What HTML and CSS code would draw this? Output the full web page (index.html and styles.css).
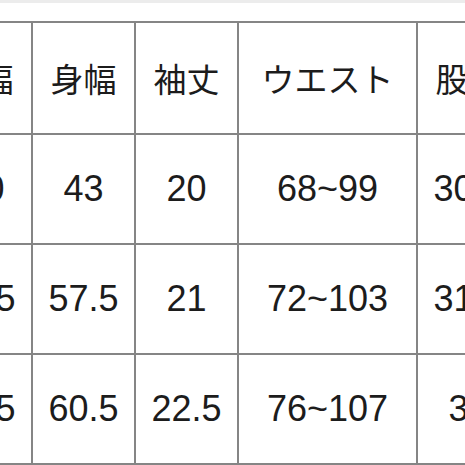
FILE: index.html
```html
<!DOCTYPE html>
<html lang="ja">
<head>
<meta charset="utf-8">
<link rel="stylesheet" href="styles.css">
</head>
<body>
<div class="sheet">
  <div class="edge"></div>
  <table class="size-table">
    <colgroup>
      <col class="c-narrow">
      <col class="c-narrow">
      <col class="c-narrow">
      <col class="c-wide">
      <col class="c-narrow">
    </colgroup>
    <tr class="head">
      <td>肩幅</td><td>身幅</td><td>袖丈</td><td>ウエスト</td><td>股下</td>
    </tr>
    <tr>
      <td class="shift">50</td><td>43</td><td>20</td><td>68~99</td><td>30.5</td>
    </tr>
    <tr>
      <td>54.5</td><td>57.5</td><td>21</td><td>72~103</td><td>31.5</td>
    </tr>
    <tr>
      <td>56.5</td><td>60.5</td><td>22.5</td><td>76~107</td><td>32</td>
    </tr>
  </table>
</div>
</body>
</html>
```
FILE: styles.css
```css
html, body {
  margin: 0;
  padding: 0;
  background: #ffffff;
}
body {
  width: 465px;
  height: 465px;
  overflow: hidden;
}
.sheet {
  width: 465px;
  height: 465px;
  overflow: hidden;
  background: #ffffff;
}
.edge {
  height: 3px;
  background: #ececec;
  margin-bottom: 18px;
}
.size-table {
  margin-left: -72px;
  border-collapse: collapse;
  table-layout: fixed;
  width: 590px;
  font-family: "Liberation Sans", "Noto Sans CJK JP", sans-serif;
  color: #1c1c1c;
  font-size: 36px;
}
.c-narrow { width: 103px; }
.c-wide { width: 179px; }
.size-table td {
  border: 2px solid #858585;
  height: 108px;
  padding: 0;
  text-align: center;
  vertical-align: middle;
  white-space: nowrap;
}
.size-table .head td {
  font-family: "Noto Sans CJK JP", sans-serif;
  font-size: 33px;
  height: 110px;
}
.size-table td.shift {
  padding-left: 8px;
}
```
